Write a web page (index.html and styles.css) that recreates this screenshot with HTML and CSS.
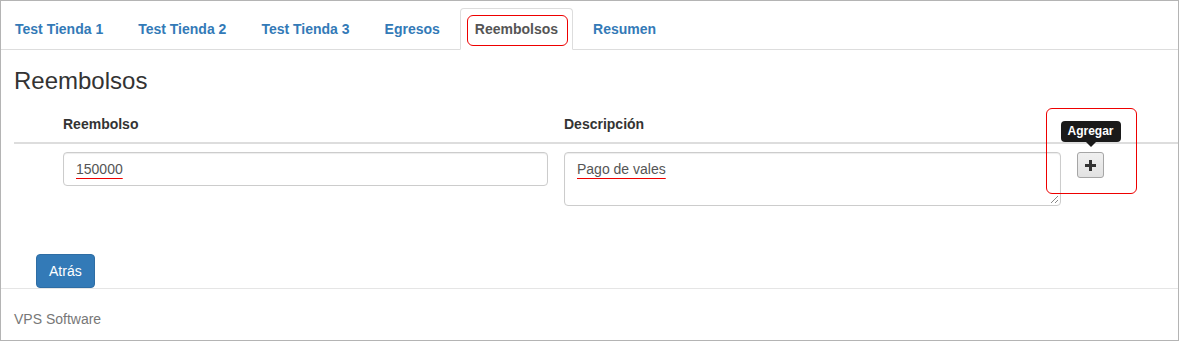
FILE: index.html
```html
<!DOCTYPE html>
<html lang="es">
<head>
<meta charset="utf-8">
<title>Reembolsos</title>
<link rel="stylesheet" href="styles.css">
</head>
<body>
<div class="frame">
  <ul class="nav-tabs">
    <li><a href="#">Test Tienda 1</a></li>
    <li><a href="#">Test Tienda 2</a></li>
    <li><a href="#">Test Tienda 3</a></li>
    <li><a href="#">Egresos</a></li>
    <li class="active"><a href="#">Reembolsos</a></li>
    <li><a href="#">Resumen</a></li>
  </ul>

  <div class="content">
    <h3 class="page-title">Reembolsos</h3>
    <table class="grid-table">
      <colgroup>
        <col class="c-pad">
        <col class="c-amount">
        <col class="c-desc">
        <col class="c-act">
      </colgroup>
      <thead>
        <tr>
          <th></th>
          <th>Reembolso</th>
          <th>Descripción</th>
          <th></th>
        </tr>
      </thead>
      <tbody>
        <tr>
          <td></td>
          <td><div class="form-control"><span class="spell">150000</span></div></td>
          <td><div class="form-control textarea"><span class="spell">Pago de vales</span></div></td>
          <td>
            <div class="add-wrap">
              <span class="tooltip">Agregar</span>
              <button class="btn-add" type="button" aria-label="Agregar">
                <svg width="11" height="11" viewBox="0 0 11 11"><rect x="4" y="0" width="3" height="11" fill="#333"/><rect x="0" y="4" width="11" height="3" fill="#333"/></svg>
              </button>
            </div>
          </td>
        </tr>
      </tbody>
    </table>
    <div class="actions">
      <button class="btn-primary" type="button">Atrás</button>
    </div>
  </div>

  <footer class="footer">VPS Software</footer>

  <span class="annot annot-tab"></span>
  <span class="annot annot-add"></span>
</div>
</body>
</html>
```
FILE: styles.css
```css
* { box-sizing: border-box; }

body {
  margin: 0;
  font-family: "Liberation Sans", Arial, Helvetica, sans-serif;
  font-size: 14px;
  line-height: 20px;
  color: #333;
  background: #fff;
}

.frame {
  position: relative;
  width: 1179px;
  height: 341px;
  border: 1px solid #b4b4b4;
  overflow: hidden;
  background: #fff;
}

/* tabs */
.nav-tabs {
  display: flex;
  gap: 5px;
  margin: 7px 0 0 -1px;
  padding: 0;
  list-style: none;
  border-bottom: 1px solid #ddd;
}
.nav-tabs li { margin-bottom: -1px; }
.nav-tabs a {
  display: block;
  padding: 10px 14px;
  border: 1px solid transparent;
  border-radius: 4px 4px 0 0;
  color: #337ab7;
  font-weight: bold;
  text-decoration: none;
  line-height: 20px;
}
.nav-tabs .active a {
  color: #555;
  background: #fff;
  border-color: #ddd #ddd transparent;
}

/* content */
.content { padding-left: 13px; }

.page-title {
  margin: 18px 0 12px;
  font-size: 24px;
  font-weight: normal;
  line-height: 26.4px;
  color: #333;
}

.grid-table {
  width: 1164px;
  border-collapse: collapse;
  table-layout: fixed;
  margin: 0 0 20px;
}
.c-pad { width: 41px; }
.c-amount { width: 501px; }
.c-desc { width: 513px; }
.c-act { width: 109px; }

.grid-table th {
  text-align: left;
  padding: 8px;
  line-height: 20px;
  font-weight: bold;
  vertical-align: bottom;
  border-bottom: 2px solid #ddd;
}
.grid-table td {
  padding: 8px;
  vertical-align: top;
}

.form-control {
  position: relative;
  display: block;
  width: 100%;
  height: 34px;
  padding: 6px 12px;
  border: 1px solid #ccc;
  border-radius: 4px;
  color: #555;
  background: #fff;
  box-shadow: inset 0 1px 1px rgba(0,0,0,.075);
  line-height: 20px;
}
.form-control.textarea { height: 54px; }
.form-control.textarea::after {
  content: "";
  position: absolute;
  right: 2px;
  bottom: 2px;
  width: 7px;
  height: 7px;
  background:
    linear-gradient(135deg, transparent 46%, #888 46%, #888 56%, transparent 56%, transparent 74%, #888 74%, #888 84%, transparent 84%);
}

.spell {
  text-decoration: underline solid #e00;
  text-decoration-thickness: 1px;
  text-underline-offset: 4px;
}

.add-wrap {
  position: relative;
  display: inline-block;
}
.btn-add {
  display: flex;
  align-items: center;
  justify-content: center;
  width: 27px;
  height: 26px;
  padding: 0;
  border: 1px solid #a6a6a6;
  border-radius: 3px;
  background: linear-gradient(#f0f0f0, #e2e2e2);
}

.tooltip {
  position: absolute;
  left: 50%;
  bottom: calc(100% + 10px);
  transform: translateX(-50%);
  padding: 3px 7px;
  background: #1a1a1a;
  color: #fff;
  font-size: 12px;
  font-weight: bold;
  line-height: 15px;
  border-radius: 4px;
  white-space: nowrap;
}
.tooltip::after {
  content: "";
  position: absolute;
  top: 100%;
  left: 50%;
  margin-left: -5px;
  border: 5px solid transparent;
  border-top-color: #1a1a1a;
  border-bottom: 0;
}

.actions { padding: 20px 0 0 22px; }
.btn-primary {
  display: block;
  padding: 6px 12px;
  border: 1px solid #2e6da4;
  border-radius: 4px;
  background: #337ab7;
  color: #fff;
  font: inherit;
  line-height: 20px;
}

.footer {
  border-top: 1px solid #e5e5e5;
  padding: 20px 13px;
  color: #777;
}

/* annotation outlines */
.annot {
  position: absolute;
  border: 1px solid #e00;
  border-radius: 6px;
  pointer-events: none;
}
.annot-tab { left: 466px; top: 14px; width: 101px; height: 31px; }
.annot-add { left: 1045px; top: 107px; width: 91px; height: 86px; }
```
